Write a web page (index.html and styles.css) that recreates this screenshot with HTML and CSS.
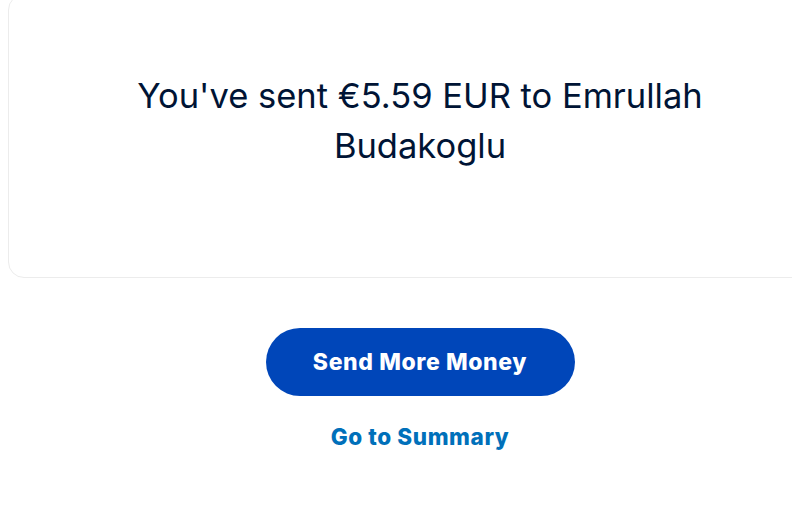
FILE: index.html
```html
<!DOCTYPE html>
<html>
<head>
<meta charset="utf-8">
<link rel="stylesheet" href="styles.css">
</head>
<body>
<main class="page">
  <section class="card">
    <h1 class="title">You've sent €5.59 EUR to Emrullah Budakoglu</h1>
  </section>
  <div class="actions">
    <button class="primary">Send More Money</button>
    <a class="link" href="#">Go to Summary</a>
  </div>
</main>
</body>
</html>
```
FILE: styles.css
```css
html, body {
  margin: 0;
  padding: 0;
  overflow: hidden;
  background: #ffffff;
}
.page {
  width: 824px;
  margin-left: 8px;
  font-family: Inter, "Noto Sans", sans-serif;
}
.card {
  box-sizing: border-box;
  margin-top: -6px;
  height: 284px;
  border: 1px solid #ececec;
  border-radius: 16px;
  padding-top: 76px;
  display: flex;
  justify-content: center;
}
.title {
  margin: 0;
  width: 640px;
  text-align: center;
  font-size: 34.5px;
  line-height: 50px;
  font-weight: 400;
  color: #001435;
}
.actions {
  display: flex;
  flex-direction: column;
  align-items: center;
  padding-top: 50px;
}
.primary {
  width: 309px;
  height: 68px;
  border: none;
  border-radius: 34px;
  background: #0046b9;
  color: #ffffff;
  font-family: Inter, "Noto Sans", sans-serif;
  font-weight: 800;
  font-size: 23px;
  letter-spacing: 0.6px;
  padding: 0;
  cursor: pointer;
}
.link {
  margin-top: 28px;
  font-size: 22.5px;
  line-height: 26px;
  letter-spacing: 0.6px;
  font-weight: 800;
  color: #0070ba;
  text-decoration: none;
}
```
